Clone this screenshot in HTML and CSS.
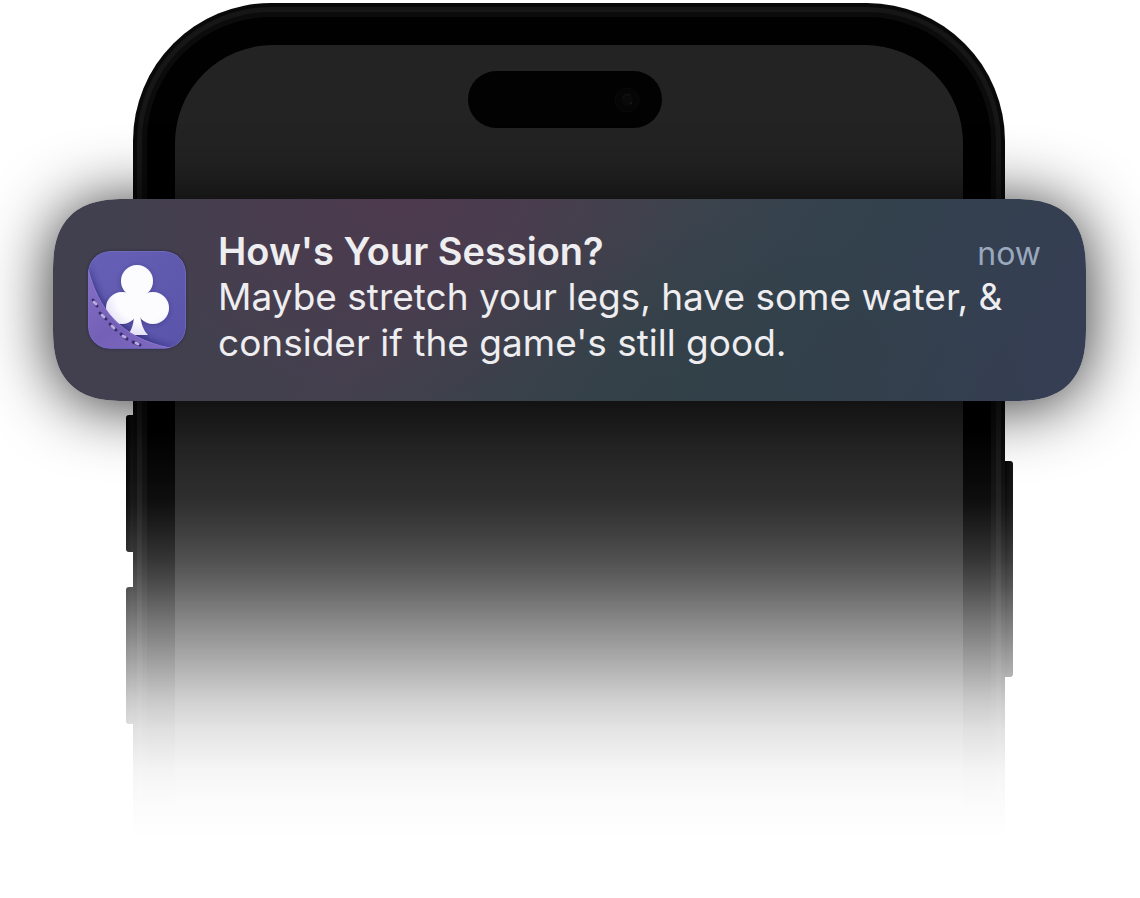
FILE: index.html
```html
<!DOCTYPE html>
<html lang="en">
<head>
<meta charset="utf-8">
<meta name="viewport" content="width=device-width, initial-scale=1">
<title>Session reminder</title>
<link rel="stylesheet" href="styles.css">
</head>
<body>
<main class="stage">
  <div class="phone" aria-hidden="true">
    <div class="keys keys-left">
      <span class="key"></span>
      <span class="key"></span>
    </div>
    <div class="frame">
      <div class="frame-ring">
        <div class="frame-inner">
          <div class="bezel">
            <div class="screen">
              <div class="island">
                <svg class="lens" viewBox="0 0 26 26">
                  <circle cx="13" cy="13" r="12" fill="#050505" stroke="#0a0a0a"/>
                  <circle cx="13" cy="13" r="6" fill="#09090a"/>
                  <path d="M9 11a5 5 0 0 1 7-3" fill="none" stroke="#101012" stroke-width="2"/>
                  <circle cx="17" cy="16" r="1" fill="#1c1c1f"/>
                </svg>
              </div>
            </div>
          </div>
        </div>
      </div>
    </div>
    <div class="keys keys-right">
      <span class="key key-power"></span>
    </div>
  </div>

  <article class="notification">
    <svg class="app-icon" viewBox="0 0 98 98" role="img" aria-label="Club suit">
      <defs>
        <linearGradient id="felt" x1="0" y1="0" x2="1" y2="1">
          <stop offset="0" stop-color="#6661b7"/>
          <stop offset=".5" stop-color="#605aaf"/>
          <stop offset="1" stop-color="#5953aa"/>
        </linearGradient>
        <linearGradient id="flap" x1="0" y1="0" x2="1" y2="1">
          <stop offset="0" stop-color="#8570c6"/>
          <stop offset=".5" stop-color="#7460b6"/>
          <stop offset="1" stop-color="#7f69c2"/>
        </linearGradient>
        <radialGradient id="club" gradientUnits="userSpaceOnUse" cx="56" cy="42" r="52">
          <stop offset=".55" stop-color="#fcfcff"/>
          <stop offset="1" stop-color="#d3cfee"/>
        </radialGradient>
        <clipPath id="tile"><rect width="98" height="98" rx="22"/></clipPath>
        <filter id="soft" x="-20%" y="-20%" width="140%" height="140%"><feGaussianBlur stdDeviation="3"/></filter>
        <filter id="lift" x="-20%" y="-20%" width="140%" height="140%"><feDropShadow dx="0" dy="1" stdDeviation="2" flood-color="#2b2770" flood-opacity=".5"/></filter>
      </defs>
      <g clip-path="url(#tile)">
        <rect width="98" height="98" fill="url(#felt)"/>
        <path d="M0 10C8 46 26 82 90 98H0Z" fill="#2c2872" opacity=".7" filter="url(#soft)"/>
        <g fill="url(#club)" filter="url(#lift)">
          <circle cx="49" cy="30" r="16"/>
          <circle cx="34" cy="57" r="16"/>
          <circle cx="65" cy="57" r="16"/>
          <path d="M39 40Q42 43 37 44L40 62L49 67L58 62L61 44Q56 43 59 40Z"/>
          <path d="M46 64H52C53 72 55 79 60 84H40C44 78 46 72 46 64Z"/>
        </g>
        <path d="M0 18C10 57 32 87 82 97H0Z" fill="url(#flap)"/>
        <path d="M0 18C10 57 32 87 82 97" fill="none" stroke="#8b79cf" stroke-width="1"/>
        <g stroke-linecap="round" fill="none">
          <path d="M5 49L9 55M12 62L18 68M22 73L28 79M33 83L39 88M45 91L52 94" stroke="#382d70" stroke-width="3"/>
          <path d="M6 51L8 53M14 64L16 66M24 75L26 77M35 85L37 86M48 92L50 93" stroke="#b9abdf" stroke-width="3"/>
        </g>
        <rect x=".5" y=".5" width="97" height="97" rx="21.5" fill="none" stroke="#7a73c2" stroke-opacity=".6"/>
      </g>
    </svg>
    <div class="copy">
      <header class="copy-head">
        <h1 class="title">How's Your Session?</h1>
        <time class="time">now</time>
      </header>
      <p class="message">Maybe stretch your legs, have some water, &amp; consider if the game's still good.</p>
    </div>
  </article>
</main>
</body>
</html>
```
FILE: styles.css
```css
* {
  box-sizing: border-box;
}

body {
  margin: 0;
  background: #fff;
  font-family: Inter, "Liberation Sans", sans-serif;
}

/* Phone and notification share one grid cell; the card lies over the phone. */
.stage {
  display: grid;
  grid-template-columns: minmax(0, 1fr);
  justify-items: center;
  align-items: start;
  padding: 3px 1px 0 0;
  overflow: hidden;
}

.phone,
.notification {
  grid-area: 1 / 1;
}

.phone {
  display: grid;
  grid-template-columns: 7px minmax(0, 1fr) 8px;
  width: 77.8%;
  -webkit-mask-image: linear-gradient(#000 427px, rgb(0 0 0 / .95) 497px, rgb(0 0 0 / .88) 527px, rgb(0 0 0 / .8) 555px, rgb(0 0 0 / .71) 580px, rgb(0 0 0 / .55) 617px, rgb(0 0 0 / .38) 657px, rgb(0 0 0 / .21) 697px, rgb(0 0 0 / .12) 727px, rgb(0 0 0 / .045) 767px, rgb(0 0 0 / .015) 800px, transparent 836px);
  mask-image: linear-gradient(#000 427px, rgb(0 0 0 / .95) 497px, rgb(0 0 0 / .88) 527px, rgb(0 0 0 / .8) 555px, rgb(0 0 0 / .71) 580px, rgb(0 0 0 / .55) 617px, rgb(0 0 0 / .38) 657px, rgb(0 0 0 / .21) 697px, rgb(0 0 0 / .12) 727px, rgb(0 0 0 / .045) 767px, rgb(0 0 0 / .015) 800px, transparent 836px);
}

.keys {
  display: flex;
  flex-direction: column;
  gap: 35px;
  padding-top: 412px;
}

.keys-right {
  padding-top: 458px;
}

.key {
  height: 137px;
  border-radius: 3px 0 0 3px;
  background: linear-gradient(90deg, #000, #0e0e0e);
}

.key-power {
  height: 216px;
  border-radius: 0 3px 3px 0;
}

.frame {
  padding: 4px 4px 0;
  border-radius: 138px 138px 0 0;
  background: #090909;
}

.frame-ring {
  padding: 5px 5px 0;
  border-radius: 134px 134px 0 0;
  background: #161616;
}

.frame-inner {
  padding: 5px 5px 0;
  border-radius: 129px 129px 0 0;
  background: #0b0b0b;
}

.bezel {
  padding: 28px 28px 0;
  border-radius: 124px 124px 0 0;
  background: #010101;
}

.screen {
  display: flex;
  justify-content: center;
  align-items: flex-start;
  min-height: 850px;
  padding: 26px 8px 0 0;
  border-radius: 98px 98px 0 0;
  background: #232323;
}

.island {
  display: flex;
  justify-content: flex-end;
  align-items: center;
  width: 25%;
  min-width: 110px;
  height: 57px;
  padding-right: 22px;
  border-radius: 29px;
  background: #020202;
}

.lens {
  width: 26px;
  height: 26px;
}

.notification {
  position: relative;
  display: flex;
  align-items: center;
  gap: 32px;
  width: calc(100% - 106px);
  margin-top: 196px;
  padding: 29px 45px 29px 35px;
  border-radius: 58px;
  background:
    radial-gradient(ellipse 28% 110% at 34% -10%, rgb(82 54 78 / .7), transparent),
    radial-gradient(ellipse 34% 100% at 62% 105%, rgb(48 63 70 / .8), transparent),
    linear-gradient(120deg, #41404e 0%, #44404e 38%, #3d434d 54%, #33424d 70%, #353e52 92%);
  box-shadow: 0 4px 66px rgb(0 0 0 / .84);
  color: #eeedf0;
}

@supports (corner-shape: superellipse(1.5)) {
  .notification {
    border-radius: 74px;
    corner-shape: superellipse(1.4);
  }
}

.app-icon {
  flex: none;
  width: 98px;
  height: 98px;
  border-radius: 22px;
  box-shadow: 0 0 2px 1px rgb(40 34 60 / .4);
}

.copy {
  flex: 1;
  min-width: 0;
  padding-bottom: 6px;
}

.copy-head {
  display: flex;
  justify-content: space-between;
  align-items: baseline;
}

.title,
.message {
  margin: 0;
  line-height: 46px;
}

.title {
  font-size: 38px;
  font-weight: 600;
}

.message {
  font-size: 37px;
  font-weight: 400;
}

.time {
  color: #9aa8be;
  font-size: 32px;
  line-height: 36px;
}
```
